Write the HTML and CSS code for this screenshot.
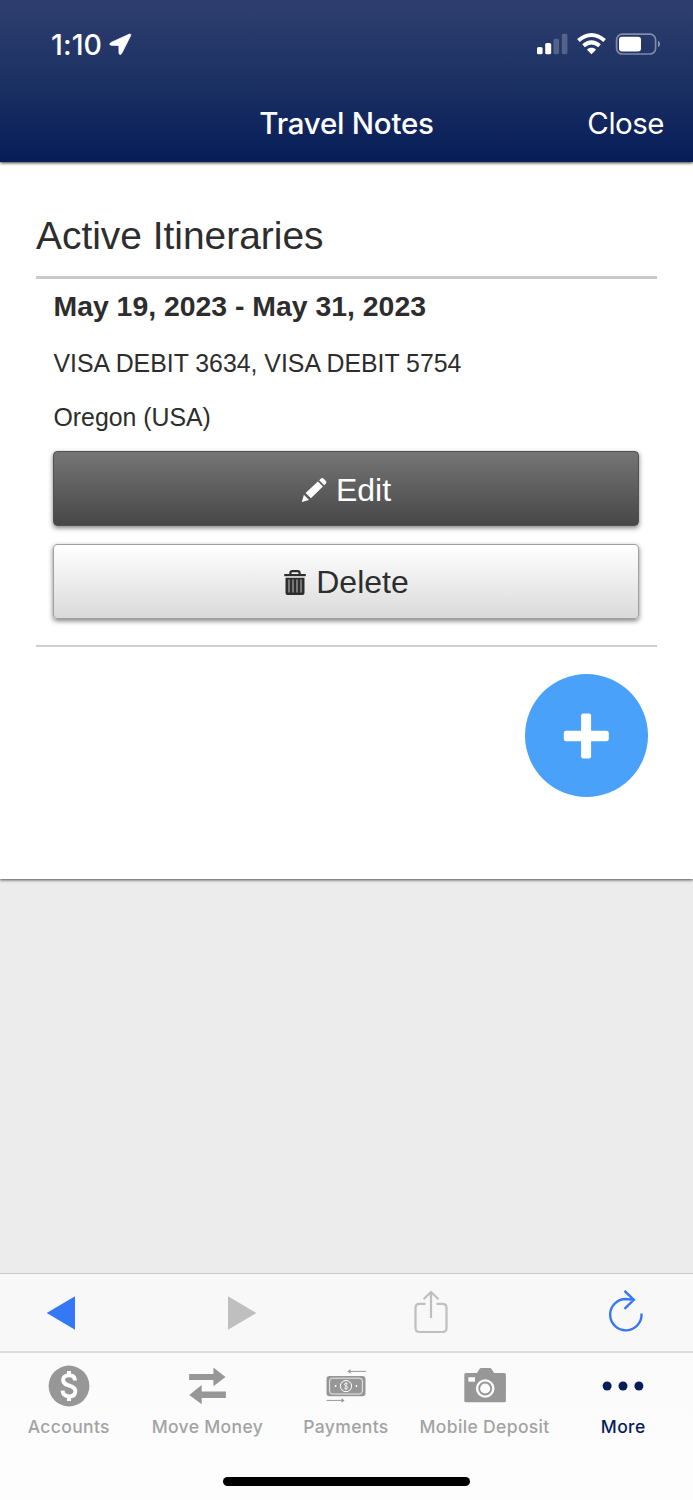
FILE: index.html
```
<!DOCTYPE html>
<html lang="en">
<head>
<meta charset="utf-8">
<title>Travel Notes</title>
<link rel="stylesheet" href="styles.css">
</head>
<body>
<div class="app">
  <header class="header">
    <div class="status">
      <span class="time">1:10</span>
      <svg class="location" width="23" height="23" viewBox="0 0 23 23"><path d="M20.200 1.200 2.200 9.400c-1.900.9-1.600 2.900.4 2.900l6.500.1c.6 0 .8.2.8.8l.1 6.500c0 2.200 1.900 2.400 2.800.5l8.800-17.500c.6-1.300-.2-2-1.400-1.500z" fill="#fff" stroke="#fff" stroke-width=".8"/></svg>
      <svg class="indicators" width="124" height="24" viewBox="536 32 124 24">
        <g fill="#fff">
          <rect x="537" y="47" width="5.600" height="7.300" rx="1.600"/>
          <rect x="545.200" y="43" width="6" height="11.300" rx="1.600"/>
          <rect x="553.500" y="38.700" width="5.600" height="15.600" rx="1.600" opacity=".22"/>
          <rect x="561.800" y="33.800" width="5.600" height="20.500" rx="1.600" opacity=".22"/>
          <rect x="619" y="36.800" width="22" height="14.600" rx="3"/>
          <path d="M658 40.800c2.700.8 2.700 5.600 0 6.400z" opacity=".45"/>
          <path d="M591.500 54.300 587 49.700c2.100-2.600 6.900-2.600 9 0z"/>
        </g>
        <path d="M578.400 40.500q13.100-11 26.200 0M583.500 45.800q8-6.800 16 0" fill="none" stroke="#fff" stroke-width="4"/>
        <rect x="616.600" y="34.200" width="39" height="19.800" rx="5.600" fill="none" stroke="#fff" stroke-opacity=".42" stroke-width="1.700"/>
      </svg>
    </div>
    <div class="titlebar">
      <h1 class="title">Travel Notes</h1>
      <span class="close">Close</span>
    </div>
  </header>

  <main class="panel">
    <h2 class="heading">Active Itineraries</h2>
    <section class="trip">
      <h3 class="dates">May 19, 2023 - May 31, 2023</h3>
      <p class="detail cards">VISA DEBIT 3634, VISA DEBIT 5754</p>
      <p class="detail place">Oregon (USA)</p>
      <button class="btn btn-dark">
        <svg width="26" height="26" viewBox="0 0 26 26"><path d="M.8 24.900 2.900 17.700 8 22.900zM4.600 15.900 16.900 4.500 21.900 9.500 9.900 21.300zM18.200 3.200 20 1.500Q21.200.4 22.400 1.500L24.900 4Q26 5.200 24.900 6.500L23.200 8.200z" fill="#fff"/></svg>
        <span>Edit</span>
      </button>
      <button class="btn btn-light">
        <svg width="24" height="27" viewBox="0 0 24 27">
          <path d="M1.200 6.100h21.600" fill="none" stroke="#2d2d2d" stroke-width="2.200"/>
          <path d="M7.400 5.500V4q0-1.900 2-1.900h5.200q2 0 2 1.900v1.500" fill="none" stroke="#2d2d2d" stroke-width="2.200"/>
          <path d="M2.500 8.700h19V24q0 2-2 2h-15q-2 0-2-2z" fill="#2d2d2d"/>
          <path d="M6 10.500v13M10 10.500v13M14 10.500v13M18 10.500v13" stroke="#b5b5b5" stroke-width="1.100"/>
        </svg>
        <span>Delete</span>
      </button>
    </section>
    <div class="add-row">
      <div class="add"><svg width="46" height="46" viewBox="0 0 46 46"><rect x=".8" y="17.800" width="45" height="10.400" rx="2.300" fill="#fff"/><rect x="18.100" y=".5" width="10" height="45" rx="2.300" fill="#fff"/></svg></div>
    </div>
  </main>

  <nav class="toolbar">
    <svg width="29" height="34" viewBox="0 0 29 34"><path d="M29 .2v33.600L.7 17z" fill="#3478f6"/></svg>
    <svg class="forward" width="29" height="34" viewBox="0 0 29 34"><path d="M0 .2v33.600L28.300 17z" fill="#bfbfbf"/></svg>
    <svg class="share" width="34" height="44" viewBox="0 0 34 44"><path d="M11.500 13.800H5.500q-4 0-4 4V38q0 4 4 4h23q4 0 4-4V17.800q0-4-4-4h-6M17 28V2.500M9.500 9.200 17 2l7.500 7.200" fill="none" stroke="#bfbfbf" stroke-width="2.200"/></svg>
    <svg class="reload" width="34" height="42" viewBox="0 0 34 42"><path d="M32.500 23.500A15.700 15.700 0 1 1 16.800 9l8.200.9M15.500.8l9.300 9-9.300 9" fill="none" stroke="#3478f6" stroke-width="2.400"/></svg>
  </nav>

  <nav class="tabs">
    <div class="tab">
      <svg width="44" height="44" viewBox="0 0 44 44"><circle cx="22" cy="22" r="20.400" fill="#979797"/><path d="M28 16.500c-.2-3.500-2.200-5.200-6-5.200-3.600 0-5.900 1.800-5.900 4.700 0 7.100 12.300 4.200 12.300 11 0 3.600-2.500 5.400-6.300 5.400-4 0-6.300-1.900-6.500-5.700M22 7.100v4.200M22 32v4.900" fill="none" stroke="#fff" stroke-width="4"/></svg>
      <span>Accounts</span>
    </div>
    <div class="tab">
      <svg width="44" height="44" viewBox="0 0 44 44"><path d="M4.100 9.900h24.300V3.500L40.500 13 28.400 22.200V16H4.100zM40.900 27.500v6.600H16.700v6.200L4.300 30.900 16.700 21.100v6.400z" fill="#979797"/></svg>
      <span>Move Money</span>
    </div>
    <div class="tab">
      <svg width="44" height="44" viewBox="0 0 44 44"><rect x="2.500" y="12" width="39" height="20.300" rx="3" fill="#979797"/><rect x="5.600" y="14.200" width="32.800" height="15.800" rx="3" fill="none" stroke="#fff" stroke-width=".8"/><circle cx="22" cy="22.100" r="5.600" fill="none" stroke="#fff"/><path d="M23.800 20.200c-.7-1.200-3.500-1-3.500.4 0 1.700 3.500 1 3.500 2.900 0 1.600-3 1.700-3.700.3M22 18v8.200" fill="none" stroke="#fff" stroke-width=".8"/><circle cx="11.600" cy="22" r=".9" fill="#fff"/><circle cx="32.400" cy="22" r=".9" fill="#fff"/><path d="M24.500 7.400H42M2.500 36.400H19" stroke="#979797"/><path d="M23.500 7.400 26.500 5v4.800zM20.500 36.400 17.500 34v4.800z" fill="#979797"/></svg>
      <span>Payments</span>
    </div>
    <div class="tab">
      <svg width="44" height="44" viewBox="0 0 44 44"><path d="M1.300 10.700q0-1.600 1.600-1.600h11l2.600-4.200q.5-.9 1.700-.9h8.600q1.200 0 1.700.9l2.600 4.200h10.200q1.600 0 1.600 1.600v26q0 1.500-1.600 1.500H2.900q-1.600 0-1.600-1.500z" fill="#979797"/><rect x="5.400" y="13.300" width="6.600" height="4.400" fill="#fff"/><circle cx="22.200" cy="24.500" r="9.300" fill="#fff"/><circle cx="22.200" cy="24.500" r="6" fill="#fff" stroke="#979797" stroke-width="1.900"/></svg>
      <span>Mobile Deposit</span>
    </div>
    <div class="tab active">
      <svg width="44" height="44" viewBox="0 0 44 44"><g fill="#071d58"><circle cx="6.100" cy="22" r="4.500"/><circle cx="22" cy="22" r="4.500"/><circle cx="37.900" cy="22" r="4.500"/></g></svg>
      <span>More</span>
    </div>
  </nav>
  <div class="home"><div class="home-bar"></div></div>
</div>
</body>
</html>
```
FILE: styles.css
```
* { box-sizing: border-box; }
body { margin: 0; }
h1, h2, h3, p { margin: 0; font-weight: 400; }
svg { display: block; flex: none; }

.app {
  width: 693px;
  height: 1500px;
  display: flex;
  flex-direction: column;
  overflow: hidden;
  background: #ececec;
  color: #2d2d2d;
  font-family: "Liberation Sans", Arial, sans-serif;
}

.header {
  z-index: 1;
  height: 162px;
  flex: none;
  background: linear-gradient(#2e3f6f, #1e3264 45%, #071d58);
  box-shadow: 0 1px 3px rgba(0, 0, 0, .8);
  color: #fff;
  font-family: Inter, sans-serif;
}
.status {
  height: 88px;
  display: flex;
  align-items: center;
  padding: 0 33px 0 51px;
}
.time { width: 51px; font-size: 28.5px; font-weight: 500; letter-spacing: .1px; white-space: nowrap; }
.location { margin-left: 7px; }
.indicators { margin-left: auto; }
.titlebar {
  display: grid;
  grid-template-columns: 1fr auto 1fr;
  align-items: center;
  height: 70px;
  padding: 0 29px;
}
.title { grid-column: 2; font-size: 29.5px; font-weight: 550; letter-spacing: -.25px; }
.close { justify-self: end; font-size: 29.5px; letter-spacing: -.5px; }

.panel {
  height: 717px;
  flex: none;
  padding: 44px 36px 0;
  background: #fff;
  box-shadow: 0 1px 3px rgba(0, 0, 0, .7);
}
.heading {
  height: 73px;
  border-bottom: 3px solid #c8c9c9;
  font-size: 38.9px;
  line-height: 60px;
}
.trip {
  height: 368px;
  padding: 9px 18px 0 17.5px;
  border-bottom: 2px solid #d0d0d0;
}
.dates { font-size: 28.4px; font-weight: 700; line-height: 36px; }
.detail { font-size: 24.85px; line-height: 30px; }
.cards { margin-top: 25px; }
.place { margin-top: 24px; }
.btn {
  display: flex;
  align-items: center;
  justify-content: center;
  gap: 9px;
  width: 586px;
  height: 75px;
  margin-left: -.5px;
  padding: 2px 0 0;
  border-radius: 4px;
  font: 32px "Liberation Sans", Arial, sans-serif;
  box-shadow: 0 2px 5px rgba(0, 0, 0, .5);
}
.btn-dark {
  margin-top: 18px;
  padding-top: 3px;
  border: 1px solid #505050;
  background: linear-gradient(#757575, #474747);
  color: #fff;
}
.btn-light {
  margin-top: 18px;
  border: 1px solid #a0a0a0;
  background: linear-gradient(#fff, #dadada);
  color: #2d2d2d;
}
.add-row { display: flex; justify-content: flex-end; padding: 27px 9.500px 0 0; }
.add {
  width: 123px;
  height: 123px;
  display: grid;
  place-items: center;
  border-radius: 50%;
  background: #4aa1f9;
}

.toolbar {
  height: 78px;
  flex: none;
  display: flex;
  align-items: center;
  margin-top: auto;
  padding: 0 0 0 46px;
  border-top: 1px solid #c9c9c9;
  background: #f8f8f8;
}
.forward { margin-left: 153px; }
.share { margin: 0 0 1px 156.500px; }
.reload { margin: 0 0 3px 161px; }
.tabs {
  height: 97px;
  flex: none;
  display: grid;
  grid-template-columns: repeat(5, 1fr);
  border-top: 2px solid #dcdcdc;
  background: linear-gradient(#fafafa, #fdfdfd);
}
.tab {
  display: flex;
  flex-direction: column;
  align-items: center;
  padding: 11px 1px 0 0;
  color: #a3a3a3;
  font: 450 17.5px/24px Inter, sans-serif;
  letter-spacing: .35px;
  white-space: nowrap;
}
.tab span { margin-top: 7px; }
.active { color: #071d58; }
.home { height: 52px; flex: none; padding-top: 29px; background: #fdfdfd; }
.home-bar { width: 247px; height: 9px; margin: 0 auto; border-radius: 5px; background: #000; }
```
